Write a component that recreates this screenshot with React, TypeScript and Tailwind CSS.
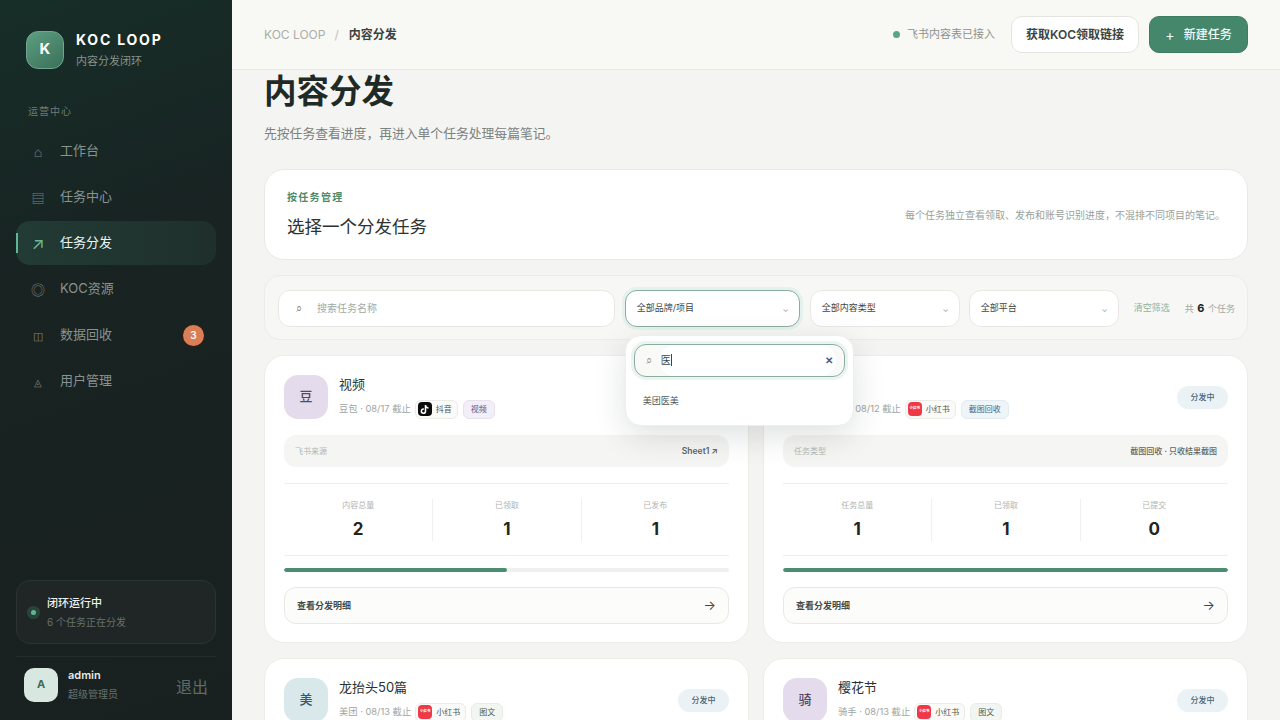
import React from "react";
import { FaTiktok } from "react-icons/fa";

const nav = [
  { icon: "⌂", label: "工作台", iconCls: "text-[14px]" },
  { icon: "▤", label: "任务中心", iconCls: "text-[13px]" },
  { icon: "↗", label: "任务分发", active: true, iconCls: "text-[17px]" },
  { icon: "◎", label: "KOC资源", iconCls: "text-[14px]" },
  { icon: "◫", label: "数据回收", badge: "3", iconCls: "text-[11px]" },
  { icon: "◬", label: "用户管理", iconCls: "text-[10px]" },
];

function Sidebar() {
  return (
    <aside className="w-[232px] shrink-0 h-full flex flex-col bg-[linear-gradient(160deg,#172e28_0%,#182322_35%,#192120_100%)] px-4 pb-[18px]">
      <div className="flex items-center gap-3 pt-[30px] pl-[10px]">
        <div className="w-[38px] h-[38px] rounded-xl bg-[linear-gradient(145deg,#5d9e82,#3a7059)] border border-[#6fa68e] flex items-center justify-center text-white font-bold text-[15px]">K</div>
        <div>
          <div className="text-white font-bold text-[14px] leading-[18px] tracking-[1.8px] mt-[1px]">KOC LOOP</div>
          <div className="text-[#87928e] text-[11px] leading-[16px] mt-[4px]">内容分发闭环</div>
        </div>
      </div>
      <div className="text-[#6f7b77] text-[10px] leading-[14px] tracking-[1px] mt-[35px] pl-3">运营中心</div>
      <nav className="flex flex-col gap-[2px] mt-[11px]">
        {nav.map((n) => (
          <div key={n.label} className={`relative h-[44px] rounded-[14px] flex items-center pl-[16px] pr-3 ${n.active ? "bg-[linear-gradient(90deg,#223b34,#1f302c)]" : ""}`}>
            {n.active && <span className="absolute left-0 top-[12px] w-[2px] h-[20px] bg-[#5fb594]" />}
            <span className={`w-[12px] flex justify-center leading-none mt-[2px] ${n.iconCls} ${n.active ? "text-[#69b896]" : "text-[#78837f]"}`}>{n.icon}</span>
            <span className={`ml-[16px] text-[13px] ${n.active ? "text-[#f0f3f1]" : "text-[#88938f]"}`}>{n.label}</span>
            {n.badge && (
              <span className="ml-auto w-[21px] h-[21px] rounded-full bg-[#da7e56] text-white text-[10px] font-semibold flex items-center justify-center ring-1 ring-[#2a201b]">{n.badge}</span>
            )}
          </div>
        ))}
      </nav>
      <div className="mt-auto h-[64px] rounded-[14px] border border-[#2a3331] bg-[#1f2625] flex items-center pl-[14px]">
        <span className="w-[5px] h-[5px] rounded-full bg-[#64b592] ring-[4px] ring-[#26443a] shrink-0" />
        <div className="ml-[11px]">
          <div className="text-[#eef1ef] text-[11px] font-medium leading-[16px]">闭环运行中</div>
          <div className="text-[#66716d] text-[10px] leading-[16px] mt-[3px]">6 个任务正在分发</div>
        </div>
      </div>
      <div className="mt-[12px] border-t border-[#242c2a] pt-[10px] pl-2 flex items-center">
        <div className="w-[34px] h-[34px] rounded-[10px] bg-[#d8e8e0] text-[#3f6b5a] font-bold text-[11px] flex items-center justify-center">A</div>
        <div className="ml-[10px]">
          <div className="text-[#e6e9e7] text-[11px] font-semibold leading-[16px]">admin</div>
          <div className="text-[#66716d] text-[10px] leading-[16px] mt-[3px]">超级管理员</div>
        </div>
        <div className="ml-auto mr-2 mt-[4px] text-[#5f6a66] text-[16px]">退出</div>
      </div>
    </aside>
  );
}

function Header() {
  return (
    <header className="h-[70px] shrink-0 bg-[#f8f8f4] border-b border-[#e8e8e3] flex items-center px-8">
      <span className="text-[#a9aea9] text-[12px]">KOC LOOP</span>
      <span className="text-[#bfc3be] text-[12px] ml-[9px] mr-[10px]">/</span>
      <span className="text-[#3b4340] text-[12px] font-semibold">内容分发</span>
      <span className="ml-auto w-[7px] h-[7px] rounded-full bg-[#5aa582]" />
      <span className="ml-[7px] text-[#8d928e] text-[11px]">飞书内容表已接入</span>
      <button className="ml-4 w-[128px] h-[37px] rounded-[11px] bg-white border border-[#e5e5e0] text-[#3c4441] text-[12px] font-semibold">获取KOC领取链接</button>
      <button className="ml-[10px] w-[99px] h-[37px] rounded-[10px] bg-[#44876b] border border-[#3f7d63] text-[#f3f7f5] text-[12px] font-medium flex items-center justify-center gap-[9px]">
        <span className="text-[14px] font-normal leading-none">+</span>
        <span>新建任务</span>
      </button>
    </header>
  );
}

function FilterSelect({ label, w, focus }: { label: string; w: string; focus?: boolean }) {
  return (
    <div className={`${w} shrink-0 h-[37px] rounded-xl bg-white flex items-center justify-between pl-[11px] pr-[10px] border ${focus ? "border-[#8aada0] ring-[3px] ring-[#e5f1ec]" : "border-[#e8e8e4]"}`}>
      <span className="text-[#3f4744] text-[9px]">{label}</span>
      <span className="text-[#a3a8a4] text-[8px] leading-none mt-[2px]">⌄</span>
    </div>
  );
}

function Dropdown() {
  return (
    <div className="absolute z-10 left-0 top-[45px] w-[229px] h-[91px] rounded-2xl bg-white p-[8px] shadow-[0_10px_32px_rgba(30,45,40,0.14)] border border-[#eeeeea]">
      <div className="relative h-[33px] rounded-xl border border-[#8aada0] ring-[3px] ring-[#eaf4f0] bg-[#f9faf8] flex items-center pl-[11px] pr-[11px]">
        <div className="absolute left-[24px] right-[8px] top-0 bottom-0 rounded-full bg-white" />
        <span className="relative text-[#8b918d] text-[11px] leading-none">⌕</span>
        <span className="relative ml-[9px] text-[#3f4744] text-[10px] border-r border-[#3f4744] leading-[12px]">医</span>
        <span className="relative ml-auto text-[#4a5a80] text-[10px] font-bold leading-none">✕</span>
      </div>
      <div className="text-[#4f5754] text-[9px] mt-[17px] pl-[9px]">美团医美</div>
    </div>
  );
}

function Platform({ kind }: { kind: "dy" | "xhs" }) {
  return (
    <span className="h-[19px] rounded-md border border-[#ebebe7] bg-[#fafaf8] flex items-center gap-[4px] pl-[2px] pr-[5px]">
      {kind === "dy" ? (
        <span className="w-[14px] h-[14px] rounded-[4px] bg-[#0a0a0a] flex items-center justify-center text-white"><FaTiktok size={9} /></span>
      ) : (
        <span className="w-[14px] h-[14px] rounded-[4px] bg-[#ee3a48] flex items-center justify-center text-white text-[3.5px] font-bold whitespace-nowrap overflow-hidden">小红书</span>
      )}
      <span className="text-[#4c5451] text-[8px]">{kind === "dy" ? "抖音" : "小红书"}</span>
    </span>
  );
}

type Card = {
  avatar: string; avatarCls: string; title: string; meta: string; platform: "dy" | "xhs";
  tag: string; tagCls: string; infoL?: string; infoR?: string; infoRCls?: string; stats?: [string, string][]; pct?: string;
};

function TaskCard({ c }: { c: Card }) {
  return (
    <div className="rounded-[20px] bg-white border border-[#ecece8] px-[19px] pt-[19px] pb-[18px] h-[288px] shrink-0">
      <div className="flex items-center">
        <div className={`w-[44px] h-[44px] rounded-[14px] flex items-center justify-center text-[13px] font-medium ${c.avatarCls}`}>{c.avatar}</div>
        <div className="ml-[11px]">
          <div className="text-[#2b3230] text-[13px] leading-[18px] -mt-[1px]">{c.title}</div>
          <div className="flex items-center mt-[7px] h-[19px]">
            <span className="text-[#a0a5a1] text-[9.3px] mr-[4px]">{c.meta}</span>
            <Platform kind={c.platform} />
            <span className={`ml-[5px] h-[19px] px-[7px] rounded-md border text-[8px] flex items-center ${c.tagCls}`}>{c.tag}</span>
          </div>
        </div>
        <span className="ml-auto w-[51px] h-[23px] rounded-full bg-[#ebf2f6] text-[#4d6677] text-[8px] font-medium flex items-center justify-center">分发中</span>
      </div>
      <div className="mt-4 h-[32px] rounded-xl bg-[#f5f5f3] flex items-center justify-between px-[11px]">
        <span className="text-[#b2b6b2] text-[8px]">{c.infoL}</span>
        <span className={`text-[#5e6663] font-medium ${c.infoRCls ?? "text-[8px]"}`}>{c.infoR}</span>
      </div>
      <div className="mt-4 h-[73px] border-t border-b border-[#eeeeeb] grid grid-cols-3 items-center">
        {c.stats?.map(([k, v], i) => (
          <div key={k} className={`h-[42px] flex flex-col items-center ${i ? "border-l border-[#f0f0ed]" : ""}`}>
            <span className="text-[#b0b4b0] text-[8px] leading-[12px]">{k}</span>
            <span className="text-[#1f2624] text-[17px] font-bold leading-[22px] mt-[7px]">{v}</span>
          </div>
        ))}
      </div>
      <div className="mt-[12px] h-[4px] rounded-full bg-[#f0f0ee] overflow-hidden">
        <div className="h-full rounded-full bg-[#4c8c70]" style={{ width: c.pct }} />
      </div>
      <div className="mt-[15px] h-[37px] rounded-xl bg-[#fcfcfb] border border-[#e8e8e4] flex items-center justify-between pl-3 pr-[12px]">
        <span className="text-[#444c49] text-[9px] font-semibold">查看分发明细</span>
        <span className="text-[#3f4744] text-[13px] leading-none">→</span>
      </div>
    </div>
  );
}

const purple = "bg-[#e4dcec] text-[#554a63]";
const xhsTag = "bg-[#eef4f7] border-[#e1ebf0] text-[#4d6677]";
const picTag = "bg-[#f2f6f3] border-[#e6ece8] text-[#4c5a53]";
const cards: Card[] = [
  { avatar: "豆", avatarCls: purple, title: "视频", meta: "豆包 · 08/17 截止", platform: "dy", tag: "视频", tagCls: "bg-[#f3eff8] border-[#e7e0ef] text-[#65557c]", infoL: "飞书来源", infoR: "Sheet1 ↗", infoRCls: "text-[8.5px] font-semibold", stats: [["内容总量", "2"], ["已领取", "1"], ["已发布", "1"]], pct: "50%" },
  { avatar: "美", avatarCls: "bg-[#dce9ee] text-[#3f5560]", title: "图", meta: "美 · 08/12 截止", platform: "xhs", tag: "截图回收", tagCls: xhsTag, infoL: "任务类型", infoR: "截图回收 · 只收结果截图", stats: [["任务总量", "1"], ["已领取", "1"], ["已提交", "0"]], pct: "100%" },
  { avatar: "美", avatarCls: "bg-[#d9e8ea] text-[#3f5560]", title: "龙抬头50篇", meta: "美团 · 08/13 截止", platform: "xhs", tag: "图文", tagCls: picTag },
  { avatar: "骑", avatarCls: purple, title: "樱花节", meta: "骑手 · 08/13 截止", platform: "xhs", tag: "图文", tagCls: picTag },
];

export default function App() {
  return (
    <div className="w-[1280px] h-[720px] overflow-hidden flex bg-[#f4f4f2] font-['Inter','Noto_Sans_CJK_SC',sans-serif]">
      <Sidebar />
      <main className="flex-1 min-w-0 flex flex-col h-full overflow-hidden">
        <Header />
        <div className="px-8">
          <h1 className="text-[32.5px] leading-[44px] font-semibold text-[#1f2a27]">内容分发</h1>
          <p className="text-[#7c827e] text-[12.8px] leading-[18px] mt-[11px]">先按任务查看进度，再进入单个任务处理每篇笔记。</p>

          <section className="mt-[26px] h-[91px] rounded-[20px] bg-white border border-[#e9e9e5] flex items-center justify-between pl-[22px] pr-[22px]">
            <div className="mt-[1px]">
              <div className="text-[#4a8a6e] text-[10px] font-semibold tracking-[1.3px] leading-[14px]">按任务管理</div>
              <div className="text-[#2b3230] text-[17.5px] leading-[26px] mt-[10px]">选择一个分发任务</div>
            </div>
            <div className="text-[#9a9f9b] text-[10px] mt-[2px]">每个任务独立查看领取、发布和账号识别进度，不混排不同项目的笔记。</div>
          </section>

          <section className="mt-[15px] h-[65px] rounded-[16px] bg-[#f7f7f5] border border-[#ebebe7] flex items-center pl-[13px] pr-[12px] pt-[1px]">
            <div className="flex-1 h-[37px] rounded-xl bg-white border border-[#e8e8e4] flex items-center pl-[17px]">
              <span className="text-[#7e8480] text-[11px] leading-none">⌕</span>
              <span className="ml-[15px] text-[#a3a8a4] text-[10px]">搜索任务名称</span>
            </div>
            <div className="relative ml-[10px]">
              <FilterSelect label="全部品牌/项目" w="w-[175px]" focus />
              <Dropdown />
            </div>
            <div className="ml-[10px]"><FilterSelect label="全部内容类型" w="w-[150px]" /></div>
            <div className="ml-[9px]"><FilterSelect label="全部平台" w="w-[150px]" /></div>
            <span className="ml-[15px] text-[#8fb3a2] text-[9px] whitespace-nowrap">清空筛选</span>
            <span className="ml-[15px] text-[#a3a8a4] text-[9px] whitespace-nowrap">共 <b className="text-[#1f2624] text-[11px] font-bold mx-[1px]">6</b> 个任务</span>
          </section>

          <div className="mt-[15px] grid grid-cols-2 gap-x-[14px] gap-y-[15px]">
            {cards.map((c) => <TaskCard key={c.title} c={c} />)}
          </div>
        </div>
      </main>
    </div>
  );
}
